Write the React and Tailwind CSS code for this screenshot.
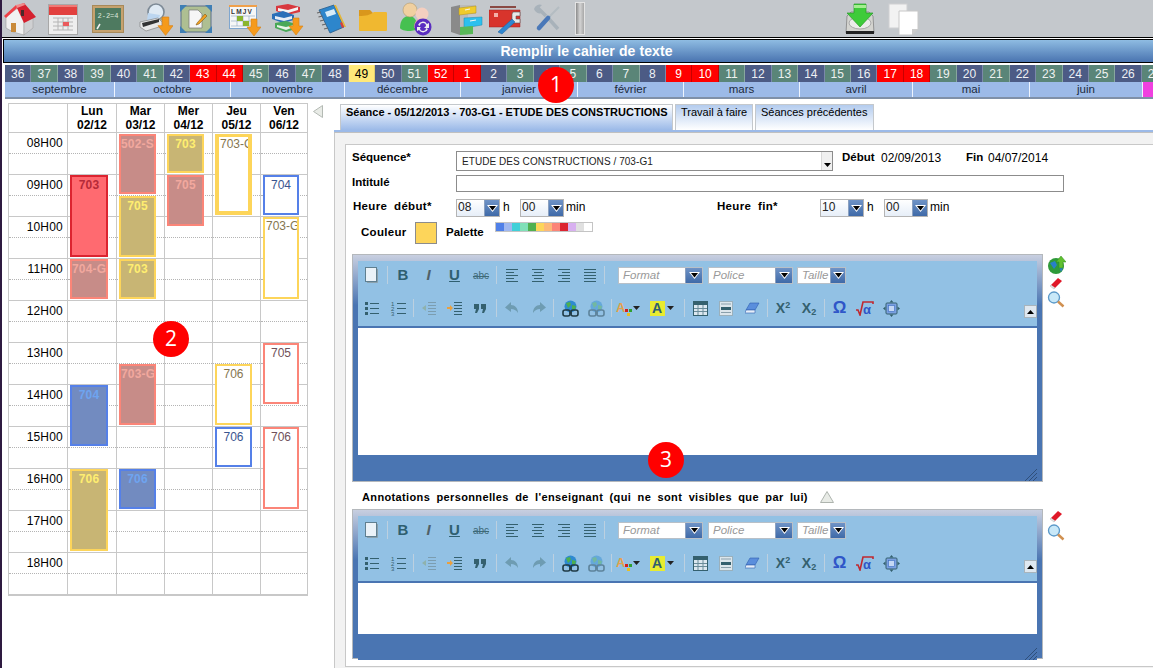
import React from "react";

const FONT = { fontFamily: '"Liberation Sans", Arial, sans-serif' };

const Arrow = ({ x = 0, y = 0, s = 1 }) => (
  <g transform={`translate(${x} ${y}) scale(${s})`}>
    <path d="M4 0h6v8h4l-7 9-7-9h4z" fill="#f59a1c" stroke="#d97f10" strokeWidth="0.6" />
  </g>
);

const Home = () => (
  <svg width="34" height="34" viewBox="0 0 34 34">
    <path d="M3 14 15 6l6 10v17l-11-3-7-4z" fill="#f1f1f1" stroke="#9a9a9a" strokeWidth=".6" />
    <path d="M21 17l9-2v11l-9 7z" fill="#cfd0d2" stroke="#9a9a9a" strokeWidth=".5" />
    <path d="M13 4 21 1l12 14-12 6z" fill="#d5202e" />
    <path d="M1 14 13 3l1 3L3 16z" fill="#ef3f46" />
    <path d="M13 3l8-2 1 2-8 3z" fill="#f08a8a" />
    <rect x="18" y="8" width="3" height="6" fill="#4a2a2a" />
    <rect x="8" y="21" width="5" height="9" fill="#c98a3a" />
  </svg>
);
const Calendar = () => (
  <svg width="30" height="32" viewBox="0 0 30 32">
    <rect x=".5" y="1.5" width="29" height="30" fill="#eeeeee" stroke="#a8a8a8" />
    <rect x="1" y="2" width="28" height="10" fill="#e2403e" />
    <rect x="1" y="2" width="28" height="2" fill="#f07a76" />
    <path d="M5 15h20M5 19h20M5 23h20M5 27h20M10 15v12M15 15v12M20 15v12" stroke="#b4b4b4" />
    <rect x="15" y="19" width="6" height="4" fill="#ea5a5c" />
  </svg>
);
const Board = () => (
  <svg width="32" height="28" viewBox="0 0 32 28">
    <rect x=".5" y=".5" width="31" height="27" fill="#c6a26e" stroke="#a88a5a" />
    <rect x="3" y="3" width="26" height="22" fill="#4e7a60" />
    <text x="16" y="13" textAnchor="middle" fontSize="7" fill="#dfe8de" fontFamily="Liberation Mono, monospace">2-2=4</text>
    <path d="M5 24l3-5" stroke="#f2f2f2" strokeWidth="1.5" />
  </svg>
);
const Printer = () => (
  <svg width="34" height="34" viewBox="0 0 34 34">
    <circle cx="17" cy="10" r="8" fill="#dfeaf4" stroke="#7d8a96" strokeWidth="1.6" />
    <path d="M22 16l5 6" stroke="#b7a06a" strokeWidth="2.5" />
    <path d="M9 11l12 2-2 7-11-2z" fill="#bcd6f0" />
    <path d="M1 20l18-4 4 4v4l-16 5-6-4z" fill="#e8e8e8" stroke="#777" strokeWidth=".6" />
    <path d="M3 21l17-4v3L4 25z" fill="#333" />
    <Arrow x={19} y={15} s={1.08} />
  </svg>
);
const Note = () => (
  <svg width="32" height="28" viewBox="0 0 32 28">
    <rect x="1" y="1" width="30" height="26" rx="3" fill="#aebf92" stroke="#5b6e88" />
    <path d="M0 0h7L0 7zM32 0h-7l7 7zM0 28h7l-7-7zM32 28h-7l7-7z" fill="#3f7fb5" />
    <path d="M9 5h9l4 4v14H9z" fill="#f6f6f6" stroke="#777" strokeWidth=".7" />
    <path d="M17 18l8-9 2 2-8 8-3 1z" fill="#f0a020" stroke="#704a10" strokeWidth=".5" />
  </svg>
);
const Cal2 = () => (
  <svg width="32" height="34" viewBox="0 0 32 34">
    <rect x=".5" y="3.5" width="27" height="23" fill="#f7f7f7" stroke="#7fa6cf" />
    <rect x="0" y="3" width="28" height="2" fill="#f0a04a" />
    <text x="2" y="12" fontSize="6.5" fontWeight="700" fill="#333" letterSpacing="1.2" style={FONT}>LMJV</text>
    <path d="M2 14h24M2 19h24M2 24h24M8 14v10M14 14v10M20 14v10" stroke="#9ab0c4" strokeWidth=".7" />
    <rect x="8" y="14" width="6" height="5" fill="#8ab52e" />
    <rect x="14" y="19" width="6" height="5" fill="#8ab52e" />
    <Arrow x={18} y={17} s={1} />
  </svg>
);
const Books = () => (
  <svg width="32" height="34" viewBox="0 0 32 34">
    <path d="M4 4l12-2 12 3v5l-13 3L4 9z" fill="#d8383e" />
    <path d="M6 6l10 2 10-3v3l-10 3-10-2z" fill="#f3f3f3" />
    <path d="M0 12l11-3 11 4v5l-11 3L0 17z" fill="#2a6fb8" />
    <path d="M3 14l9 2 8-2v3l-8 2-9-2z" fill="#e8eef5" />
    <path d="M3 21l11-2 10 3v5l-10 3-11-4z" fill="#49a858" />
    <path d="M5 23l9 2 8-2v2l-8 3-9-3z" fill="#e8f3e8" />
    <Arrow x={17} y={16} s={1} />
  </svg>
);
const BlueBook = () => (
  <svg width="32" height="32" viewBox="0 0 32 32">
    <path d="M4 7 19 2l10 22-14 6z" fill="#2d86cc" stroke="#2a5d8c" strokeWidth=".8" />
    <path d="M19 2l2 0 10 22-2 0z" fill="#e2b53a" />
    <path d="M27 19l2 5-2 1-2-5z" fill="#d94040" />
    <path d="M10 9l9-3 2 5-9 3z" fill="#d8ecf8" />
    <path d="M2 10l4-1M3.500 14l4-1M5 18l4-1M7 22l4-1M9 26l4-1" stroke="#666" strokeWidth="1.2" />
  </svg>
);
const Folder = () => (
  <svg width="30" height="26" viewBox="0 0 30 26">
    <path d="M1 4h11l3 3h13v17H1z" fill="#d9971c" />
    <path d="M1 10c7 0 11-1 15-4h12c1 0 1 1 1 2v16a1 1 0 0 1-1 1H2a1 1 0 0 1-1-1z" fill="#f0b830" />
  </svg>
);
const Users = () => (
  <svg width="34" height="34" viewBox="0 0 34 34">
    <path d="M0 26c0-8 4-12 9-12s8 4 9 12c-2 4-16 4-18 0z" fill="#46c050" />
    <circle cx="10" cy="8" r="7" fill="#f0d0a0" stroke="#a89060" strokeWidth=".5" />
    <path d="M14 26c0-7 4-10 8-10s9 3 9 9z" fill="#f0a8b0" />
    <circle cx="22" cy="12" r="6.500" fill="#f4cfc0" />
    <circle cx="23" cy="25" r="8.500" fill="#5a2ec0" />
    <path d="M18 23a5 5 0 0 1 9-1l2-1v5h-5l2-2a3 3 0 0 0-6 0zM28 27a5 5 0 0 1-9 1l-2 1v-4h4l-1 1a3 3 0 0 0 6 0z" fill="#eee" />
  </svg>
);
const Cabinet = () => (
  <svg width="32" height="32" viewBox="0 0 32 32">
    <path d="M0 4l9-2v30l-9-3z" fill="#8a8a8a" />
    <path d="M9 2h16v9H9zM9 11h8v21H9z" fill="#bbbbbb" />
    <path d="M8 5l17-2v7L8 12z" fill="#f0cb2c" stroke="#b09018" strokeWidth=".5" />
    <path d="M13 15l18-1v8l-18 3z" fill="#2cc0ee" stroke="#1a88b0" strokeWidth=".5" />
    <path d="M9 24l13-1v8l-13 1z" fill="#58b858" />
    <path d="M14 7l5-1M19 18l6-1" stroke="#f4f4f4" strokeWidth="1.200" />
  </svg>
);
const Toolbox = () => (
  <svg width="32" height="32" viewBox="0 0 32 32">
    <rect x="1" y="3" width="26" height="2" fill="#8a4a44" />
    <path d="M0 7h31v17H0z" fill="#d8342c" stroke="#a02020" strokeWidth=".5" />
    <rect x="5" y="10" width="4" height="4" fill="#f4b0a8" />
    <path d="M24 9h7v4h-4v3h4v4h-8v-9z" fill="#e8e8e8" stroke="#555" strokeWidth=".6" />
    <path d="M23 16l3 3-13 12-4-2z" fill="#2e86d0" stroke="#1a5a98" strokeWidth=".5" />
  </svg>
);
const Tools = () => (
  <svg width="28" height="30" viewBox="0 0 28 30">
    <path d="M4 4 12 12M15 15l9 10" stroke="#a8b2ba" strokeWidth="3.500" />
    <path d="M0 5a6 6 0 0 0 8 4l-3-5 3-3a6 6 0 0 0-8 4z" fill="#a8b2ba" />
    <path d="M25 3 14 14" stroke="#b4bcc2" strokeWidth="2" />
    <path d="M14 14 5 24" stroke="#4a78b8" strokeWidth="4.500" strokeLinecap="round" />
  </svg>
);
const Disk = () => (
  <svg width="30" height="32" viewBox="0 0 30 32">
    <path d="M2 13 6 9h18l4 4 1 17H1z" fill="#d4d4d0" stroke="#6a6a6a" strokeWidth=".6" />
    <ellipse cx="15" cy="20" rx="11" ry="6" fill="#ececea" stroke="#aaa" />
    <rect x="1" y="28" width="28" height="3" fill="#222" />
    <path d="M9 1h12v9h7L15 24 2 10h7z" fill="#3ecb3a" stroke="#2a9a2a" strokeWidth=".7" />
    <path d="M9 2h12v3H9z" fill="#a4ee90" />
  </svg>
);
const Copy = () => (
  <svg width="31" height="32" viewBox="0 0 31 32">
    <rect x="1" y="1" width="18" height="24" fill="#f2f2f2" stroke="#cfd0d2" />
    <path d="M11 8h19v18l-6 6H11z" fill="#ffffff" stroke="#c8c8c8" />
    <path d="M24 32v-6h6z" fill="#cccccc" />
  </svg>
);

const WEEKS = [
  ["36", "b"], ["37", "g"], ["38", "b"], ["39", "g"], ["40", "b"], ["41", "g"], ["42", "b"], ["43", "r"], ["44", "r"], ["45", "g"], ["46", "b"], ["47", "g"], ["48", "b"], ["49", "y"], ["50", "b"], ["51", "g"], ["52", "r"], ["1", "r"], ["2", "b"], ["3", "g"], ["4", "b"], ["5", "g"], ["6", "b"], ["7", "g"], ["8", "b"], ["9", "r"], ["10", "r"], ["11", "g"], ["12", "b"], ["13", "g"], ["14", "b"], ["15", "g"], ["16", "b"], ["17", "r"], ["18", "r"], ["19", "g"], ["20", "b"], ["21", "g"], ["22", "b"], ["23", "g"], ["24", "b"], ["25", "g"], ["26", "b"], ["27", "g"],
];
const WEEK_CLASS = {
  b: "bg-[#4c5b85] text-[#eef0f4] border-[#7b88aa]",
  g: "bg-[#5a8578] text-[#eef2f0] border-[#88a79e]",
  r: "bg-[#ff0000] text-white border-[#c80000]",
  y: "bg-[#ffe97a] text-black border-[#e0cf70]",
};
const MONTHS = [
  ["septembre", "w-[110px]"], ["octobre", "w-[116px]"], ["novembre", "w-[114px]"], ["décembre", "w-[116px]"], ["janvier", "w-[117px]"], ["février", "w-[106px]"], ["mars", "w-[116px]"], ["avril", "w-[113px]"], ["mai", "w-[117px]"], ["juin", "w-[113px]"],
];

const HOURS = ["08H00", "09H00", "10H00", "11H00", "12H00", "13H00", "14H00", "15H00", "16H00", "17H00", "18H00"];
const COLS = ["w-[49px]", "w-[48px]", "w-[48px]", "w-[48px]", "w-[47px]"];

const RF = "border-[#fb8578] bg-[#c78c88] text-[#f2a89e] font-bold tracking-[0.2px]";
const YF = "border-[#fdd55a] bg-[#c8b574] text-[#ffee70] font-bold tracking-[0.2px]";
const BF = "border-[#5580e8] bg-[#728bc0] text-[#6ea4f0] font-bold tracking-[0.2px]";
const RO = "border-[#fb8578] bg-white text-[#70505a]";
const YO = "border-[#fdd55a] bg-white text-[#857650]";
const BO = "border-[#5580e8] bg-white text-[#3a5590]";
const EVENTS = [
  ["703", "left-[61px] top-[71px] w-[38px] h-[82px] border-[#dc2430] bg-[#ff6a70] text-[#b52a38] font-bold tracking-[0.2px]"],
  ["704-G", "left-[61px] top-[155px] w-[38px] h-[40px] " + RF],
  ["704", "left-[61px] top-[281px] w-[38px] h-[61px] " + BF],
  ["706", "left-[61px] top-[365px] w-[38px] h-[82px] " + YF],
  ["502-S", "left-[110px] top-[30px] w-[37px] h-[60px] " + RF],
  ["705", "left-[110px] top-[92px] w-[37px] h-[61px] " + YF],
  ["703", "left-[110px] top-[155px] w-[37px] h-[40px] " + YF],
  ["703-G", "left-[110px] top-[260px] w-[37px] h-[61px] " + RF],
  ["706", "left-[110px] top-[365px] w-[37px] h-[40px] " + BF],
  ["703", "left-[158px] top-[30px] w-[37px] h-[39px] " + YF],
  ["705", "left-[158px] top-[71px] w-[37px] h-[51px] " + RF],
  ["706", "left-[206px] top-[260px] w-[37px] h-[61px] " + YO],
  ["706", "left-[206px] top-[323px] w-[37px] h-[40px] " + BO],
  ["704", "left-[254px] top-[71px] w-[36px] h-[40px] " + BO],
  ["705", "left-[254px] top-[239px] w-[36px] h-[61px] " + RO],
  ["706", "left-[254px] top-[323px] w-[36px] h-[82px] " + RO],
];

const Event = ({ label, cls }) => (
  <div className={"absolute overflow-hidden border-2 pt-[1px] text-center text-[12px] leading-[15px] whitespace-nowrap " + cls}>
    {label}
  </div>
);

const Badge = ({ n, cls }) => (
  <div className={"absolute z-20 flex h-[36px] w-[36px] items-center justify-center rounded-full bg-[#ff0000] text-[21px] font-medium text-white " + cls} style={{ fontFamily: '"Open Sans", sans-serif' }}>
    {n}
  </div>
);

const Drop = ({ cls = "" }) => (
  <span className={"flex items-center justify-center border-l border-[#8aa0c0] bg-gradient-to-b from-[#6f93c6] to-[#3f6aa8] " + cls}>
    <svg width="11" height="7" viewBox="0 0 11 7"><path d="M0 0h11L5.500 7z" fill="#fff" /><path d="M2 1h7L5.500 5.500z" fill="#000" /></svg>
  </span>
);

const TimeSel = ({ v }) => (
  <div className="flex h-[18px] w-[44px] border border-[#b4b4b4] bg-gradient-to-b from-white to-[#e6eef8]">
    <span className="w-[27px] pl-[1px] text-[12px] leading-[15px] text-[#222]">{v}</span>
    <Drop cls="w-[15px]" />
  </div>
);

const Slot = ({ children, cls = "w-[26px]" }) => <div className={"flex h-[18px] items-center justify-center " + cls}>{children}</div>;
const Sep = () => <div className="mx-[2px] h-[18px] w-[1px] bg-[#bcd0e0]" />;

const INK = "#34606e";
const Lines = ({ d, c = INK, w = 1 }) => (
  <svg width="16" height="16" viewBox="0 0 16 16"><path d={d} stroke={c} strokeWidth={w} fill="none" /></svg>
);
const PageIc = () => (
  <svg width="14" height="16" viewBox="0 0 14 16"><rect x=".5" y=".5" width="11" height="14" fill="#eaf2f8" stroke="#5f7f90" /><path d="M12.500 2v13.500H2" stroke="#8aa0ac" fill="none" /></svg>
);
const BulletIc = () => (
  <svg width="16" height="16" viewBox="0 0 16 16">
    <path d="M6 3.500h9M6 8.500h9M6 13.500h9" stroke={INK} />
    <path d="M1 2h3v3H1zM1 7h3v3H1zM1 12h3v3H1z" fill={INK} />
  </svg>
);
const OutIc = () => (
  <svg width="16" height="16" viewBox="0 0 16 16">
    <path d="M7 2.500h8M7 5.500h8M7 8.500h8M7 11.500h8M7 14.500h8" stroke="#7b9db0" />
    <path d="M1 8l4-3v6z" fill="#8fb2ad" />
  </svg>
);
const InIc = () => (
  <svg width="16" height="16" viewBox="0 0 16 16">
    <path d="M7 2.500h8M7 5.500h8M7 8.500h8M7 11.500h8M7 14.500h8" stroke={INK} />
    <path d="M0 7h3V5l3 3-3 3V9H0z" fill="#e8a040" />
  </svg>
);
const UndoIc = ({ flip }) => (
  <svg width="15" height="14" viewBox="0 0 15 14" style={flip ? { transform: "scaleX(-1)" } : undefined}>
    <path d="M6 1 0 6.500 6 11V8c3 0 5 1 7 4 0-5-3-8-7-8z" fill="#6e9cb2" />
  </svg>
);
const LinkIc = ({ faded }) => (
  <svg width="17" height="17" viewBox="0 0 17 17" opacity={faded ? 0.45 : 1}>
    <circle cx="8.500" cy="6.500" r="6" fill="#2f8ad0" />
    <path d="M4 3l4-1 1 3-3 3zM10 5l4 1-1 4-3-1z" fill="#4caf50" />
    <rect x="1" y="10" width="7" height="6" rx="2" fill="none" stroke="#1f3a44" strokeWidth="1.600" />
    <rect x="9" y="10" width="7" height="6" rx="2" fill="none" stroke="#1f3a44" strokeWidth="1.600" />
    <path d="M7 13h3" stroke="#1f3a44" strokeWidth="1.500" />
  </svg>
);
const Caret = () => <svg width="7" height="4" viewBox="0 0 7 4"><path d="M0 0h7L3.500 4z" fill="#222" /></svg>;
const TableIc = () => (
  <svg width="15" height="15" viewBox="0 0 15 15"><rect x=".5" y=".5" width="14" height="14" fill="#dce8f0" stroke={INK} /><rect x="1" y="1" width="13" height="3" fill={INK} /><path d="M1 7.500h13M1 10.500h13M5 4v10M10 4v10" stroke="#6a8c9a" /></svg>
);
const HrIc = () => (
  <svg width="14" height="15" viewBox="0 0 14 15"><rect x=".5" y=".5" width="13" height="14" fill="#dce6ec" stroke="#9ab0bc" /><rect x="2" y="6" width="10" height="3" fill="#34606e" /><path d="M2 3h10M2 11.500h10" stroke="#8aa0ac" /></svg>
);
const EraserIc = () => (
  <svg width="15" height="12" viewBox="0 0 15 12"><path d="M5 1h9L10 8H1z" fill="#5a8edc" stroke="#2f5fb0" strokeWidth=".6" /><path d="M1 8h9v3H0z" fill="#e6eef8" stroke="#2f5fb0" strokeWidth=".6" /></svg>
);
const RootIc = () => (
  <svg width="18" height="15" viewBox="0 0 18 15"><path d="M0 9h2l2 5 3-13h10v2" fill="none" stroke="#c02830" strokeWidth="1.600" /><text x="7" y="13" fontSize="13" fontWeight="700" fill="#2f56c8" style={FONT}>α</text></svg>
);
const MaxIc = () => (
  <svg width="17" height="17" viewBox="0 0 17 17"><rect x="3" y="3" width="11" height="11" rx="1" fill="#7aa0e0" stroke="#34606e" /><rect x="5.500" y="5.500" width="6" height="6" fill="#c4d8f4" stroke="#3a6cc0" strokeWidth=".6" /><path d="M8.500 0l2 2.500h-4zM8.500 17l2-2.500h-4zM0 8.500l2.500-2v4zM17 8.500l-2.500-2v4z" fill="#34606e" /></svg>
);

const TbSel = ({ label, box, arrow = "w-[17px]", cls = "" }) => (
  <div className={"flex h-[17px] border border-[#b8c0c8] " + cls}>
    <span className={"block overflow-hidden bg-white pl-[4px] text-[11.5px] leading-[15px] text-[#999] italic " + box}>{label}</span>
    <Drop cls={arrow} />
  </div>
);

const Toolbar = () => (
  <div className="relative h-[67px] border-b-2 border-[#4a75b2] bg-[#92c1e4] pt-[5px] pl-[1px]">
    <div className="flex h-[18px] items-center">
      <Slot><PageIc /></Slot>
      <Sep />
      <Slot cls="w-[26px] text-[15px] font-bold text-[#2f5f70]">B</Slot>
      <Slot cls="w-[25px] text-[15px] font-bold text-[#4f6068] italic">I</Slot>
      <Slot cls="w-[27px] text-[15px] font-bold text-[#2f5f70] underline">U</Slot>
      <Slot cls="w-[26px] text-[10px] text-[#3f6a78] line-through">abc</Slot>
      <Sep />
      <Slot><Lines d="M2 2.500h12M2 5.500h8M2 8.500h12M2 11.500h8M2 14.500h12" /></Slot>
      <Slot><Lines d="M2 2.500h12M4 5.500h8M2 8.500h12M4 11.500h8M2 14.500h12" /></Slot>
      <Slot><Lines d="M2 2.500h12M6 5.500h8M2 8.500h12M6 11.500h8M2 14.500h12" /></Slot>
      <Slot cls="w-[25px]"><Lines d="M2 2.500h12M2 5.500h12M2 8.500h12M2 11.500h12M2 14.500h12" /></Slot>
      <Sep />
      <TbSel label="Format" box="w-[66px]" cls="ml-[11px]" />
      <TbSel label="Police" box="w-[66px]" cls="ml-[5px]" />
      <TbSel label="Taille" box="w-[32px]" arrow="w-[15px]" cls="ml-[4px]" />
    </div>
    <div className="mt-[15px] flex h-[18px] items-center">
      <Slot><BulletIc /></Slot>
      <Slot>
        <svg width="17" height="16" viewBox="0 0 17 16">
          <path d="M7 3.500h9M7 8.500h9M7 13.500h9" stroke={INK} />
          <text x="1" y="6" fontSize="6" fill={INK} style={FONT}>1</text>
          <text x="1" y="11" fontSize="6" fill={INK} style={FONT}>2</text>
          <text x="1" y="16" fontSize="6" fill={INK} style={FONT}>3</text>
        </svg>
      </Slot>
      <Sep />
      <Slot><OutIc /></Slot>
      <Slot cls="w-[25px]"><InIc /></Slot>
      <Slot cls="w-[27px]">
        <svg width="13" height="11" viewBox="0 0 13 11"><path d="M0 1h5v5L3 10H1l1-4H0zM7 1h5v5l-2 4H8l1-4H7z" fill={INK} /></svg>
      </Slot>
      <Sep />
      <Slot><UndoIc /></Slot>
      <Slot><UndoIc flip /></Slot>
      <Sep />
      <Slot cls="ml-[1px] w-[27px]"><LinkIc /></Slot>
      <Slot cls="w-[25px]"><LinkIc faded /></Slot>
      <Sep />
      <Slot cls="w-[28px] gap-[1px]">
        <svg width="16" height="15" viewBox="0 0 16 15">
          <text x="0" y="11" fontSize="13" fontWeight="700" fill="#e2a24a" style={FONT}>A</text>
          <rect x="9" y="8" width="3" height="3" fill="#d02020" /><rect x="13" y="8" width="3" height="3" fill="#30a030" /><rect x="11" y="12" width="3" height="3" fill="#e8c020" />
        </svg>
        <Caret />
      </Slot>
      <Slot cls="ml-[3px] w-[33px] gap-[2px]">
        <span className="flex h-[15px] w-[15px] items-center justify-center bg-[#e8ec30] text-[14px] font-bold text-[#2f5f70]">A</span>
        <Caret />
      </Slot>
      <div className="w-[4px]" />
      <Sep />
      <Slot><TableIc /></Slot>
      <Slot><HrIc /></Slot>
      <Slot><EraserIc /></Slot>
      <Sep />
      <Slot cls="w-[26px] text-[14px] font-bold text-[#34606e]"><span>X<sup className="text-[9px]">2</sup></span></Slot>
      <Slot cls="w-[26px] text-[14px] font-bold text-[#34606e]"><span>X<sub className="text-[9px]">2</sub></span></Slot>
      <Sep />
      <Slot cls="w-[25px] text-[17px] font-bold text-[#2f56c8]">Ω</Slot>
      <Slot><RootIc /></Slot>
      <Slot><MaxIc /></Slot>
    </div>
    <div className="absolute top-[44px] right-0 flex h-[13px] w-[13px] items-center justify-center border border-[#a8b4bc] bg-[#dfe8f0]">
      <svg width="7" height="4" viewBox="0 0 7 4"><path d="M3.500 0 7 4H0z" fill="#000" /></svg>
    </div>
  </div>
);

const Grip = () => (
  <svg className="absolute right-0 bottom-0" width="14" height="14" viewBox="0 0 14 14"><path d="M14 2 2 14M14 6 6 14M14 10l-4 4" stroke="#2f4f7a" strokeWidth="1" /></svg>
);

const Editor = ({ body, outer }) => (
  <div className={"w-[691px] border border-[#b4b8bc] bg-[linear-gradient(#c8cfe0_0px,#4a75b2_50px)] px-[5px] pt-[6px] " + outer}>
    <Toolbar />
    <div className={"bg-white " + body} />
    <div className="relative h-[26px] bg-[#4a75b2]"><Grip /></div>
  </div>
);

const RedEraser = () => (
  <svg width="14" height="13" viewBox="0 0 14 13"><path d="M9 0l4 3-7 7-4-3z" fill="#e01828" /><path d="M2 7l4 3-1 1-4-3z" fill="#f0f0f0" stroke="#999" strokeWidth=".4" /></svg>
);
const Loupe = () => (
  <svg width="18" height="17" viewBox="0 0 18 17"><circle cx="7" cy="6.500" r="5.500" fill="#c8e8f8" stroke="#5a98c8" strokeWidth="1.300" /><path d="M11 10.500l5.500 5" stroke="#d09050" strokeWidth="2.500" /></svg>
);
const Globe = () => (
  <svg width="18" height="19" viewBox="0 0 18 19"><circle cx="8" cy="10" r="8" fill="#2f9a3a" /><path d="M2 7l5-2 2 4-3 4zM11 11l4 1-2 4z" fill="#2880c8" /><path d="M13 0l5 6h-3v6h-4V6H8z" fill="#60c030" stroke="#2f8a20" strokeWidth=".5" /></svg>
);
const Tri = ({ cls }) => (
  <svg className={cls} width="14" height="12" viewBox="0 0 14 12"><path d="M7 .5 13.500 11.500H.5z" fill="#e8ebe6" stroke="#aeb4ae" /></svg>
);

export default function App() {
  const palette = ["bg-[#5080e8]", "bg-[#a0b8f0]", "bg-[#40d0d8]", "bg-[#80e0b8]", "bg-[#50b050]", "bg-[#fdd55a]", "bg-[#fdb878]", "bg-[#fb8578]", "bg-[#dc2430]", "bg-[#d8b0f0]", "bg-[#e0e0e0]", "bg-[#ffffff]"];
  return (
    <div className="relative h-[668px] w-[1153px] overflow-hidden border-l-2 border-[#2e1a40] bg-white text-black" style={FONT}>
      <div className="flex h-[38px] items-center border-b border-black bg-[#c4c8cc] pl-[1px]">
        <div><Home /></div>
        <div className="ml-[11px]"><Calendar /></div>
        <div className="ml-[14px]"><Board /></div>
        <div className="ml-[15px]"><Printer /></div>
        <div className="ml-[7px]"><Note /></div>
        <div className="ml-[17px]"><Cal2 /></div>
        <div className="ml-[11px]"><Books /></div>
        <div className="ml-[11px]"><BlueBook /></div>
        <div className="ml-[11px]"><Folder /></div>
        <div className="ml-[12px]"><Users /></div>
        <div className="ml-[17px]"><Cabinet /></div>
        <div className="ml-[6px]"><Toolbox /></div>
        <div className="ml-[13px]"><Tools /></div>
        <div className="ml-[13px] h-[33px] w-[10px] border border-[#e4e4e4] bg-gradient-to-r from-[#8c8c8c] via-[#d4d4d4] to-[#a8a8a8]" />
        <div className="ml-[260px]"><Disk /></div>
        <div className="ml-[13px]"><Copy /></div>
      </div>

      <div className="mt-[1px] ml-[1px] flex h-[24px] items-center justify-center border-y border-l border-black bg-gradient-to-b from-[#8fbce2] to-[#4a74b0] pl-[16px] text-[14px] font-bold tracking-[0.1px] text-white">
        Remplir le cahier de texte
      </div>

      <div className="mt-[2px] ml-[3px] flex h-[17px] w-[1200px]">
        {WEEKS.map(([n, c]) => (
          <div key={n} className={"flex h-[17px] w-[26.45px] shrink-0 items-center justify-center border-r text-[12px] " + WEEK_CLASS[c]}>{n}</div>
        ))}
      </div>
      <div className="ml-[3px] flex h-[17px] border-b-2 border-[#7f90a8] bg-[#9cbae8]">
        {MONTHS.map(([m, w]) => (
          <div key={m} className={"h-[15px] shrink-0 border-r border-[#eef4ff] text-center text-[11.5px] leading-[14px] text-[#1c2a3c] " + w}>{m}</div>
        ))}
        <div className="h-[15px] w-[20px] bg-[#f040e0]" />
      </div>

      <div className="flex">
        <div className="relative mt-[4px] ml-[6px] w-[300px] self-start border border-r-0 border-[#c8c8c8]">
          <div className="flex h-[29px] border-b border-[#c8c8c8] text-center text-[12px] leading-[14px] font-bold text-black">
            <div className="w-[59px] border-r border-[#c8c8c8]" />
            {[["Lun", "02/12"], ["Mar", "03/12"], ["Mer", "04/12"], ["Jeu", "05/12"], ["Ven", "06/12"]].map(([d, n], i) => (
              <div key={d} className={"border-r border-[#c8c8c8] " + COLS[i]}>{d}<br />{n}</div>
            ))}
          </div>
          {HOURS.map((h) => (
            <div key={h} className="flex h-[42px] border-b border-[#c8c8c8]">
              <div className="h-full w-[59px] border-r border-[#c8c8c8]">
                <div className="h-[21px] border-b border-dotted border-[#b4b4b4] pt-[3px] pr-[4px] text-right text-[12px] leading-[15px] tracking-[0.2px]">{h}</div>
              </div>
              {COLS.map((w, i) => (
                <div key={i} className={"h-full border-r border-[#c8c8c8] " + w}>
                  <div className="h-[21px] border-b border-dotted border-[#b4b4b4]" />
                </div>
              ))}
            </div>
          ))}
          {EVENTS.map(([l, c], i) => <Event key={i} label={l} cls={c} />)}
          <div className="absolute top-[30px] left-[206px] h-[81px] w-[37px] overflow-hidden border-[4px] border-t-[3px] border-[#fdd55a] bg-white pl-[1px] text-[12px] leading-[15px] whitespace-nowrap text-[#857650]">703-G</div>
          <div className="absolute top-[113px] left-[254px] h-[82px] w-[36px] overflow-hidden border-2 border-[#fdd55a] bg-white pl-[1px] text-[12px] leading-[15px] whitespace-nowrap text-[#857650]">703-G</div>
        </div>

        <div className="w-[26px] pt-[6px] pl-[5px]">
          <svg width="10" height="13" viewBox="0 0 10 13"><path d="M9.500.5v12L.5 6.500z" fill="#e8ebe6" stroke="#b4bab4" /></svg>
        </div>

        <div className="min-w-0 flex-1">
          <div className="flex h-[31px] items-end pl-[6px]">
            <div className="h-[26px] w-[333px] border border-b-0 border-[#c4c8cc] bg-gradient-to-b from-white to-[#9cbae8] pt-[1px] pl-[5px] text-[11px] leading-[13px] font-bold whitespace-nowrap">Séance - 05/12/2013 - 703-G1 - ETUDE DES CONSTRUCTIONS</div>
            <div className="ml-[2px] h-[26px] w-[78px] border border-b-0 border-[#c4c8cc] bg-gradient-to-b from-[#b4ccee] to-white pt-[1px] pl-[5px] text-[11px] leading-[13px] whitespace-nowrap">Travail à faire</div>
            <div className="ml-[2px] h-[26px] w-[119px] border border-b-0 border-[#c4c8cc] bg-gradient-to-b from-[#b4ccee] to-white pt-[1px] pl-[5px] text-[11px] leading-[13px] whitespace-nowrap">Séances précédentes</div>
          </div>
          <div className="h-[3px] border-b border-[#c0c0c0] bg-[#9cbae8]" />
          <div className="h-[535px] border-l border-[#c8c8c8] bg-[#f2f2f2] pt-[11px] pl-[10px]">
            <div className="h-[523px] border border-r-0 border-[#c8c8c8] bg-white pt-[6px] pl-[6px]">
              <div className="flex h-[20px] items-center text-[11.5px]">
                <span className="w-[104px] pb-[6px] font-bold">Séquence*</span>
                <div className="relative flex h-[20px] w-[377px] items-center border border-[#8c8c8c] pl-[5px] text-[10px] tracking-[0.06px] text-[#222]">
                  ETUDE DES CONSTRUCTIONS / 703-G1
                  <span className="absolute top-0 right-0 bottom-0 flex w-[11px] items-end justify-center border-l border-[#d8d8d8] bg-[#f0f0f0] pb-[3px]"><svg width="7" height="4" viewBox="0 0 7 4"><path d="M0 0h7L3.500 4z" fill="#000" /></svg></span>
                </div>
                <span className="ml-[9px] w-[39px] pb-[6px] font-bold">Début</span>
                <span className="w-[85px] pb-[6px] text-[12px]">02/09/2013</span>
                <span className="w-[22px] pb-[6px] font-bold">Fin</span>
                <span className="pb-[6px] text-[12px]">04/07/2014</span>
              </div>
              <div className="mt-[4px] flex h-[17px] items-center text-[11.5px]">
                <span className="w-[104px] pb-[2px] font-bold">Intitulé</span>
                <div className="h-[17px] w-[608px] border border-[#8c8c8c]" />
              </div>
              <div className="mt-[7px] flex h-[18px] items-center text-[12px]">
                <span className="w-[104px] pb-[2px] pl-[1px] text-[11.5px] font-bold tracking-[0.3px]">Heure&nbsp; début*</span>
                <TimeSel v="08" />
                <span className="ml-[3px] w-[17px] pb-[2px]">h</span>
                <TimeSel v="00" />
                <span className="ml-[2px] w-[151px] pb-[2px]">min</span>
                <span className="w-[103px] pb-[2px] text-[11.5px] font-bold tracking-[0.3px]">Heure&nbsp; fin*</span>
                <TimeSel v="10" />
                <span className="ml-[3px] w-[17px] pb-[2px]">h</span>
                <TimeSel v="00" />
                <span className="ml-[2px] pb-[2px]">min</span>
              </div>
              <div className="mt-[5px] flex h-[22px] items-center text-[11.5px] font-bold">
                <span className="ml-[9px] w-[54px] tracking-[0.3px]">Couleur</span>
                <div className="h-[22px] w-[22px] border border-[#8c8c8c] bg-[#fdd55a]" />
                <span className="ml-[9px] w-[49px]">Palette</span>
                <div className="-mt-[12px] flex h-[10px] border border-[#c4c4c4]">
                  {palette.map((p) => <div key={p} className={"h-full w-[8px] " + p} />)}
                </div>
              </div>

              <div className="mt-[10px] flex">
                <Editor outer="h-[228px]" body="h-[127px]" />
                <div className="ml-[4px] flex flex-col items-start">
                  <div className="mt-[2px] ml-[1px]"><Globe /></div>
                  <div className="mt-[3px] ml-[2px]"><RedEraser /></div>
                  <div className="ml-[0px]"><Loupe /></div>
                </div>
              </div>
              <div className="mt-[8px] flex h-[14px] items-center pl-[10px] text-[11px] leading-[14px] font-bold tracking-[0.36px]" style={{ wordSpacing: "3px" }}>
                Annotations personnelles de l'enseignant (qui ne sont visibles que par lui)
                <Tri cls="ml-[12px]" />
              </div>
              <div className="mt-[5px] flex">
                <Editor outer="h-[150px]" body="h-[51px]" />
                <div className="ml-[4px] flex flex-col items-start">
                  <div className="mt-[2px] ml-[2px]"><RedEraser /></div>
                  <div><Loupe /></div>
                </div>
              </div>
            </div>
          </div>
        </div>
      </div>

      <Badge n="1" cls="left-[536px] top-[67px]" />
      <Badge n="2" cls="left-[151px] top-[321px]" />
      <Badge n="3" cls="left-[646px] top-[442px]" />
    </div>
  );
}
